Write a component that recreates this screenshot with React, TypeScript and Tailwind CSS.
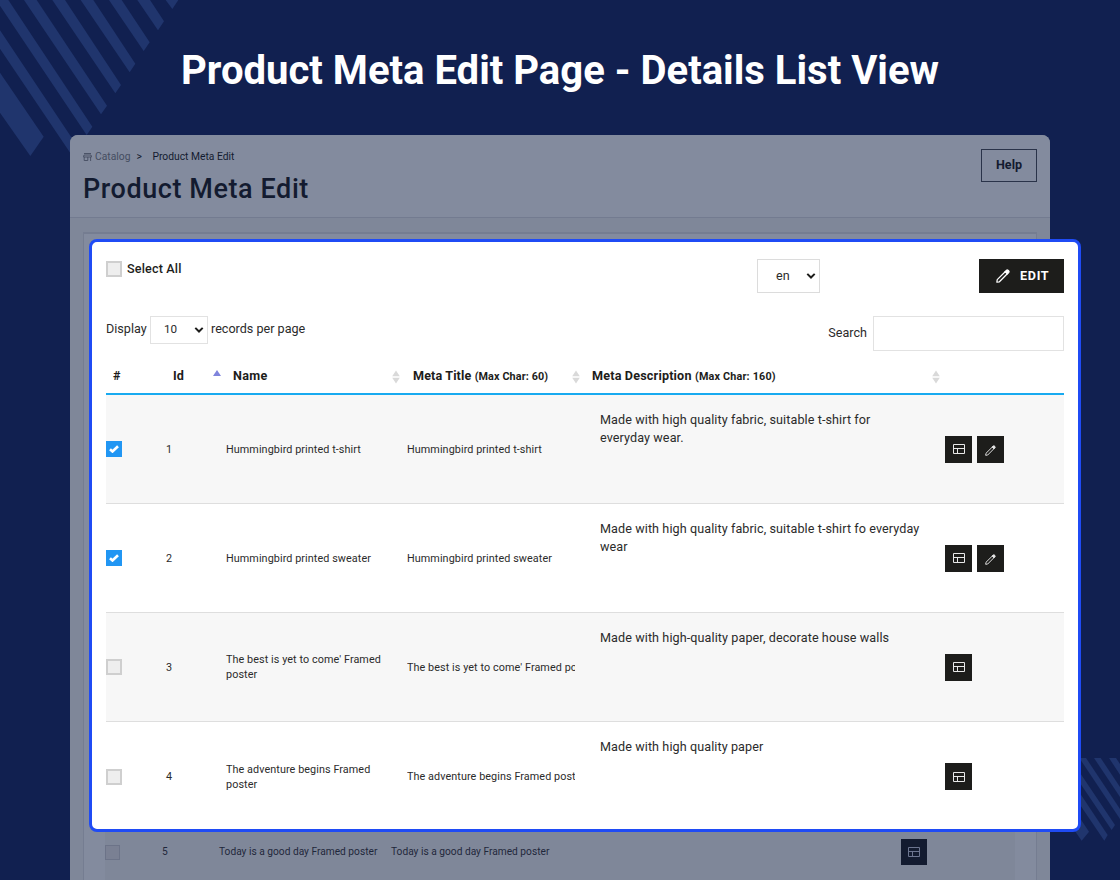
import { ReactNode } from 'react';
import clsx from 'clsx';

interface Product {
  id: number;
  name: string;
  title: string;
  description: string;
  checked?: boolean;
}

const products: Product[] = [
  {
    id: 1,
    name: 'Hummingbird printed t-shirt',
    title: 'Hummingbird printed t-shirt',
    description: 'Made with high quality fabric, suitable t-shirt for everyday wear.',
    checked: true,
  },
  {
    id: 2,
    name: 'Hummingbird printed sweater',
    title: 'Hummingbird printed sweater',
    description: 'Made with high quality fabric, suitable t-shirt fo everyday wear',
    checked: true,
  },
  {
    id: 3,
    name: "The best is yet to come' Framed poster",
    title: "The best is yet to come' Framed poster",
    description: 'Made with high-quality paper, decorate house walls',
  },
  {
    id: 4,
    name: 'The adventure begins Framed poster',
    title: 'The adventure begins Framed poster',
    description: 'Made with high quality paper',
  },
];

function PencilIcon({ className }: { className?: string }) {
  return (
    <svg viewBox="0 0 16 16" className={className} fill="none" stroke="currentColor" strokeWidth="1.4">
      <path d="M1 15l.4-2.9 9.4-9.3 2.4 2.4-9.3 9.4z" strokeLinejoin="round" />
      <path d="M10.4 3l1.5-1.5a1.3 1.3 0 0 1 1.8 0l.8.8a1.3 1.3 0 0 1 0 1.8L13 5.6z" fill="currentColor" />
    </svg>
  );
}

function LayoutIcon({ className }: { className?: string }) {
  return (
    <svg viewBox="0 0 12 10" className={className} fill="none" stroke="currentColor">
      <path d="M.5.5h11v9H.5zM.5 4.5h11M4.5 4.5v5" />
    </svg>
  );
}

function StoreIcon() {
  return (
    <svg viewBox="0 0 9 8" className="h-2 w-[9px]" fill="none" stroke="currentColor" strokeWidth="0.9">
      <path d="M1 .5h7M1 2h7l.5 2h-8zM1.2 4v3.5h3.6V4M7.6 4v4" />
    </svg>
  );
}

function Chevron() {
  return (
    <svg viewBox="0 0 10 6" className="h-1.5 w-2.5 shrink-0" fill="none" stroke="#1d1d1b" strokeWidth="2">
      <path d="M1.3 .9L5 4.5 8.7 .9" />
    </svg>
  );
}

function SortIcon() {
  return (
    <svg viewBox="0 0 8 14" className="h-3.5 w-2" fill="#d9d9d9">
      <path d="M4 .5l3.8 5.8H.2zM4 13.5l3.8-5.8H.2z" />
    </svg>
  );
}

function Checkbox({ checked }: { checked?: boolean }) {
  return (
    <div
      className={clsx(
        'flex size-4 shrink-0 items-center justify-center',
        checked ? 'bg-[#2196f3]' : 'border-2 border-[#cfcfcf] bg-[#eeeeee]'
      )}
    >
      {checked && (
        <svg viewBox="0 0 10 8" className="h-2 w-2.5" fill="none" stroke="#fff" strokeWidth="2.6">
          <path d="M1 4.2l2.5 2.3L9 1.2" />
        </svg>
      )}
    </div>
  );
}

function IconButton({ children }: { children: ReactNode }) {
  return <button className="flex size-[27px] items-center justify-center bg-[#1d1d1b] text-[#e8e8e8]">{children}</button>;
}

function Backdrop() {
  return (
    <>
      <svg viewBox="0 0 660 480" className="absolute left-0 top-0 h-40 w-[220px]" fill="#20356d">
        <path d="M0 218L131 410 91 468 0 338z" />
        <path d="M0 91L235 443 217 468 0 146z" />
        <path d="M0 0H25L277 380 260 405 0 17z" />
        <path d="M72 0h38L321 317 303 343z" />
        <path d="M157 0h38L363 255 346 280z" />
        <path d="M242 0h38L406 191 389 217z" />
        <path d="M327 0h38L449 127 431 153z" />
        <path d="M412 0h38L492 64 474 91z" />
        <path d="M497 0h38L517 27z" />
      </svg>
      <svg viewBox="0 0 150 270" className="absolute left-[1070px] top-[755px] h-[90px] w-[50px]" fill="#20356d">
        <path d="M0 144L57 230 35 257 0 206z" />
        <path d="M0 70L113 240 103 257 0 105z" />
        <path d="M0 9L135 210 125 225 0 40z" />
        <path d="M28 9H48L150 162V192z" />
        <path d="M72 9H92L150 96V126z" />
        <path d="M117 9H138L150 27V59z" />
      </svg>
    </>
  );
}

function BackPage() {
  return (
    <div className="absolute left-[70px] top-[135px] flex h-[745px] w-[980px] flex-col overflow-hidden rounded-t-lg bg-[#7f8799] text-[#131b30]">
      <header className="flex h-[83px] shrink-0 justify-between border-b border-[#737b90] bg-[#838b9e] pl-[13px] pr-[13px] pt-[14px]">
        <div>
          <nav className="flex h-4 items-center text-[10.3px]">
            <span className="flex items-center gap-[3px] text-[#454d61]">
              <StoreIcon />
              <span>Catalog</span>
            </span>
            <span className="ml-[6px] w-[16px]">&gt;</span>
            <span>Product Meta Edit</span>
          </nav>
          <h1 className="mt-[6px] whitespace-nowrap text-[27px] font-medium leading-9 tracking-[0.57px]">
            Product Meta Edit
          </h1>
        </div>
        <button className="flex h-[33px] w-[56px] items-center justify-center border border-[#2a3349] text-[12.6px] font-bold">
          Help
        </button>
      </header>
      <div className="mx-[13px] mt-[14px] flex flex-1 flex-col justify-end border-x border-t-2 border-[#757d91] bg-[#838b9e] px-[21px]">
        <div className="flex h-[51px] items-center bg-[#7f8799] pb-[5px] text-[10.2px] text-[#1f273b]">
          <div className="w-[57px]">
            <div className="size-[15px] border-[1.5px] border-[#6c7388] bg-[#7a8093]" />
          </div>
          <span className="w-[57px]">5</span>
          <span className="w-[172px] whitespace-nowrap">Today is a good day Framed poster</span>
          <span className="w-[510px] whitespace-nowrap">Today is a good day Framed poster</span>
          <div className="flex size-[26px] items-center justify-center bg-[#131b30] text-[#6c7590]">
            <LayoutIcon className="h-2.5 w-3" />
          </div>
        </div>
      </div>
    </div>
  );
}

function TableHead() {
  return (
    <div className="mt-[9px] flex h-[35px] shrink-0 items-center border-b-2 border-[#18aaf0] text-[12.6px] font-bold text-[#1d1d1b]">
      <span className="w-[67px] pl-[7px]">#</span>
      <span className="w-10">Id</span>
      <svg viewBox="0 0 8 6" className="-mt-[7px] mr-[12px] h-1.5 w-2" fill="#7f84dc">
        <path d="M4 0l4 6H0z" />
      </svg>
      <span className="w-[159px] tracking-[0.3px]">Name</span>
      <SortIcon />
      <span className="ml-[13px] w-[159px] whitespace-nowrap tracking-[0.12px]">
        Meta Title <span className="text-[10.8px]">(Max Char: 60)</span>
      </span>
      <SortIcon />
      <span className="ml-[12px] w-[340px] whitespace-nowrap tracking-[0.18px]">
        Meta Description <span className="text-[10.8px]">(Max Char: 160)</span>
      </span>
      <SortIcon />
    </div>
  );
}

function ProductRow({ product, striped }: { product: Product; striped: boolean }) {
  return (
    <div
      className={clsx(
        'flex h-[109px] items-center border-b border-[#dedede] text-[10.8px] leading-[15px] tracking-[0.08px] last:border-b-0',
        striped && 'bg-[#f7f7f7]'
      )}
    >
      <div className="w-[60px]">
        <Checkbox checked={product.checked} />
      </div>
      <span className="w-[60px]">{product.id}</span>
      <span className="w-[181px] pr-5">{product.name}</span>
      <span className="w-[168px] overflow-hidden whitespace-nowrap">{product.title}</span>
      <p className="h-full w-[346px] pl-[25px] pt-[16px] text-[12.6px] leading-[18px] tracking-[0.09px]">
        {product.description}
      </p>
      <div className="ml-[24px] flex gap-[5px]">
        <IconButton>
          <LayoutIcon className="h-2.5 w-3" />
        </IconButton>
        {product.checked && (
          <IconButton>
            <PencilIcon className="mt-[3px] size-[11px]" />
          </IconButton>
        )}
      </div>
    </div>
  );
}

export default function App() {
  return (
    <div className="relative h-[880px] w-[1120px] overflow-hidden bg-[#112050] font-['Roboto',sans-serif] text-[#2b2b2b]">
      <Backdrop />
      <h2 className="pt-[47px] text-center text-[40.05px] font-bold leading-[48px] text-white">
        Product Meta Edit Page - Details List View
      </h2>
      <BackPage />

      {/* Highlighted list, lifted over the dimmed page */}
      <main className="absolute left-[89px] top-[239px] flex h-[593px] w-[992px] flex-col overflow-hidden rounded-lg border-[3px] border-[#1f4bf5] bg-white px-[14px] pt-[17px]">
        <div className="flex h-[35px] shrink-0 items-start">
          <label className="flex flex-1 items-center gap-[5px] text-[12.6px] font-medium leading-5 tracking-[0.15px] text-[#1d1d1b]">
            <Checkbox />
            Select All
          </label>
          <div className="mr-[159px] flex h-[34px] w-[63px] items-center justify-between border border-[#dcdcdc] pl-[18px] pr-[3px] text-[12.6px]">
            en
            <Chevron />
          </div>
          <button className="flex h-[34px] w-[85px] items-center gap-[10px] bg-[#1d1d1b] pl-[17px] text-[12.6px] font-bold tracking-[0.7px] text-white">
            <PencilIcon className="size-[14px]" />
            EDIT
          </button>
        </div>

        <div className="mt-[21px] flex h-[36px] shrink-0 items-start justify-between text-[12.6px]">
          <div className="flex items-center">
            <span className="w-11">Display</span>
            <div className="mr-[3px] mt-px flex h-7 w-[58px] items-center justify-between border border-[#e2e2e2] pl-[13px] pr-[3px] text-[11.7px]">
              10
              <Chevron />
            </div>
            <span>records per page</span>
          </div>
          <div className="mt-px flex items-center gap-[6px]">
            <span>Search</span>
            <div className="h-[35px] w-[191px] border border-[#e2e2e2]" />
          </div>
        </div>

        <TableHead />
        <div className="shrink-0">
          {products.map((product, i) => (
            <ProductRow key={product.id} product={product} striped={i % 2 === 0} />
          ))}
        </div>
      </main>
    </div>
  );
}
